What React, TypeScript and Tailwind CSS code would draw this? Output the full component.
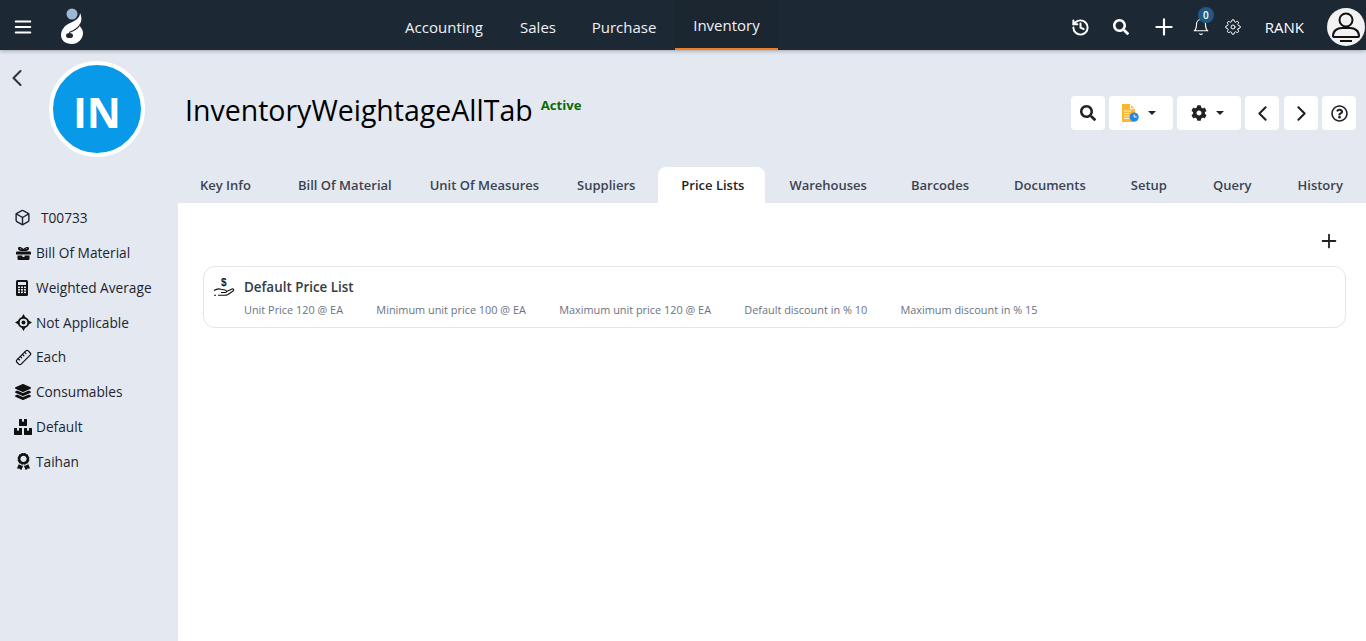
import React from "react";
import { FaLayerGroup, FaBoxes, FaAward, FaCog, FaSearch, FaRegQuestionCircle } from "react-icons/fa";
import { FiBox, FiSettings } from "react-icons/fi";
import { LuHistory, LuBell, LuChevronLeft, LuChevronRight, LuPlus, LuRuler, LuMenu } from "react-icons/lu";

const Logo = () => (
  <svg width="24" height="37" viewBox="0 0 24 37">
    <circle cx="12" cy="6" r="5.500" fill="#9db8d4" />
    <path fill="#fff" d="M20 5C20 10 15 13 10 15C5 17 1 22 1 27C1 32 5 36 12 36C18 36 23 31 23 25C23 21 20 19 19 17C22 14 22 9 20 5Z" />
    <ellipse cx="9.500" cy="27.500" rx="3.500" ry="2.600" fill="#1d2835" />
    <path d="M9 24.500C13 23 17 21.500 19.500 17.500" stroke="#1d2835" strokeWidth="1.200" fill="none" />
  </svg>
);

const BomIcon = () => (
  <svg width="17" height="15" viewBox="0 0 17 15" fill="#111">
    <path fillRule="evenodd" d="M3 2.500C3 .5 6 .5 8.500 3C11 .5 14 .5 14 2.500C14 4 12.500 5 11 5H6C4.500 5 3 4 3 2.500ZM5 2.300C5 3 6 3.500 7 3.500C6 2.500 5 2 5 2.300ZM12 2.300C12 2 11 2.500 10 3.500C11 3.500 12 3 12 2.300Z" />
    <path d="M1 6.500C1 6 1.500 5.500 2 5.500H15C15.500 5.500 16 6 16 6.500V8.500H1Z" />
    <path d="M2.500 9.500H7.500V11H9.500V9.500H14.500V12.500C14.500 13.500 14 14 13 14H4C3 14 2.500 13.500 2.500 12.500Z" />
  </svg>
);

const CalcIcon = () => (
  <svg width="12" height="16" viewBox="0 0 12 16">
    <rect width="12" height="16" rx="1.500" fill="#111" />
    <rect x="2" y="2" width="8" height="3" fill="#e4e9f1" />
    {[6.5, 9, 11.5].flatMap((y) =>
      [2, 5, 8].map((x) => <rect key={`${x}-${y}`} x={x} y={y} width="2" height="1.600" fill="#e4e9f1" />)
    )}
  </svg>
);

const TargetIcon = () => (
  <svg width="17" height="17" viewBox="0 0 17 17" fill="#111">
    <circle cx="8.500" cy="8.500" r="4.800" fill="none" stroke="#111" strokeWidth="1.900" />
    <circle cx="8.500" cy="8.500" r="2" />
    <path d="M8.500 0L10.200 3H6.800ZM8.500 17L6.800 14H10.200ZM0 8.500L3 6.800V10.200ZM17 8.500L14 10.200V6.800Z" />
  </svg>
);

const sideItems: [React.ReactNode, string][] = [
  [<BomIcon />, "Bill Of Material"],
  [<span className="ml-[1px] flex"><CalcIcon /></span>, "Weighted Average"],
  [<TargetIcon />, "Not Applicable"],
  [<LuRuler size={17} strokeWidth={1.700} className="-scale-x-100" />, "Each"],
  [<FaLayerGroup size={16} />, "Consumables"],
  [<span className="-ml-[1px] flex"><FaBoxes size={18} /></span>, "Default"],
  [<FaAward size={17} />, "Taihan"],
];

const tabs: [string, string][] = [
  ["Key Info", "pl-[22px] pr-[23px]"],
  ["Bill Of Material", "pl-[24px] pr-[19px]"],
  ["Unit Of Measures", "pl-[19px] pr-[18px]"],
  ["Suppliers", "pl-[20px] pr-[23px]"],
  ["Price Lists", "pl-[23px] pr-[21px]"],
  ["Warehouses", "pl-[24px] pr-[21px]"],
  ["Barcodes", "pl-[23px] pr-[22px]"],
  ["Documents", "pl-[23px] pr-[22px]"],
  ["Setup", "pl-[23px] pr-[23px]"],
  ["Query", "pl-[23px] pr-[23px]"],
  ["History", "pl-[23px] pr-[22px]"],
];
const details = ["Unit Price 120 @ EA", "Minimum unit price 100 @ EA", "Maximum unit price 120 @ EA", "Default discount in % 10", "Maximum discount in % 15"];

const Btn = ({ className, children }: { className: string; children: React.ReactNode }) => (
  <button className={`${className} h-[34px] bg-white rounded flex items-center text-[#222]`}>{children}</button>
);
const Caret = () => <span className="w-0 h-0 border-x-[4px] border-x-transparent border-t-[4px] border-t-[#222]" />;

export default function App() {
  return (
    <div className="h-[641px] w-[1366px] overflow-hidden flex flex-col bg-[#e4e9f1] font-['Open_Sans','Noto_Sans',sans-serif]">
      <header className="relative z-10 h-[50px] shrink-0 bg-[#1d2835] shadow-[0_1px_4px_rgba(0,0,0,0.3)] flex items-center text-white">
        <LuMenu size={22} className="ml-[12px] mt-[3px] shrink-0" />
        <div className="ml-[26px] mt-[3px] shrink-0 flex"><Logo /></div>
        <nav className="ml-[302px] flex h-full text-[15px] text-[#f0f2f5]">
          <a className="w-[116px] pt-[4px] flex items-center justify-center">Accounting</a>
          <a className="w-[72px] pt-[4px] flex items-center justify-center">Sales</a>
          <a className="w-[100px] pt-[4px] flex items-center justify-center">Purchase</a>
          <a className="ml-[1px] w-[103px] pt-[2px] flex items-center justify-center border-b-2 border-[#f47b20] bg-[#1c2630]">Inventory</a>
        </nav>
        <div className="ml-auto flex items-center h-full pr-[1px] pt-[4px]">
          <LuHistory size={19} strokeWidth={2.500} />
          <FaSearch size={16} className="ml-[23px]" />
          <LuPlus size={26} className="ml-[22px]" />
          <div className="relative ml-[15px]">
            <LuBell size={18} strokeWidth={1.500} />
            <span className="absolute -top-[11px] left-[6px] w-[16px] h-[16px] rounded-full bg-[#1f5a85] text-[10px] font-semibold flex items-center justify-center">0</span>
          </div>
          <FiSettings size={16} strokeWidth={1.500} className="ml-[15px]" />
          <span className="ml-[24px] text-[15px]">RANK</span>
          <div className="ml-[23px] w-[38px] h-[38px] rounded-full bg-[#f2f2f2] flex items-center justify-center">
            <svg width="34" height="34" viewBox="0 0 34 34" fill="none" stroke="#111" strokeWidth="2">
              <circle cx="17" cy="10" r="6.500" />
              <path d="M4 26c0-5 4-8 9-8h8c5 0 9 3 9 8 0 1-1 1-2 1H6c-1 0-2 0-2-1z" />
              <path d="M11 31h12" />
            </svg>
          </div>
        </div>
      </header>

      <div className="flex-1 flex min-h-0">
        <aside className="w-[178px] shrink-0 flex flex-col">
          <LuChevronLeft size={28} strokeWidth={1.800} className="ml-[3px] mt-[14px] text-[#333]" />
          <div className="ml-[49px] mt-[-31px] w-[96px] h-[96px] rounded-full bg-[#0899e8] border-[4px] border-white flex items-center justify-center pt-[4px] text-white text-[42px] font-bold">IN</div>
          <ul className="mt-[43px] text-[13.700px] text-[#1c2430]">
            <li className="h-[35.800px] flex items-center pl-[14px]"><FiBox size={17} /><span className="ml-[10px]">T00733</span></li>
            {sideItems.map(([icon, t]) => (
              <li key={t} className="h-[34.800px] flex items-center">
                <span className="w-[36px] pl-[15px] flex items-center text-[#111]">{icon}</span>
                <span>{t}</span>
              </li>
            ))}
          </ul>
        </aside>
        <main className="flex-1 min-w-0 flex flex-col">
          <div className="h-[117px] shrink-0 flex items-start">
            <div className="ml-[7px] mt-[41px] text-[28.500px] leading-[38px] text-black">InventoryWeightageAllTab</div>
            <div className="ml-[8px] mt-[45px] text-[13.200px] font-bold text-[#086b08] leading-[20px]">Active</div>
            <div className="ml-auto mr-[10px] mt-[46px] flex gap-[4px]">
              <Btn className="w-[34px] justify-center"><FaSearch size={16} /></Btn>
              <Btn className="w-[64px] pl-[13px] gap-[9px]">
                <svg width="17" height="18" viewBox="0 0 17 18">
                  <path fill="#fdb62f" d="M0 0h8l5 5v13H0z" />
                  <path d="M8.500 .8v4h4" stroke="#fff" fill="none" />
                  <path d="M2 7h7M2 9.500h5M2 12h5M2 14.500h5" stroke="#fff" strokeWidth="0.800" />
                  <circle cx="12.200" cy="13" r="4.500" fill="#1e88e5" />
                  <path d="M12.200 10.500v2.500h2.500" stroke="#fff" fill="none" />
                </svg>
                <Caret />
              </Btn>
              <Btn className="w-[64px] pl-[14px] gap-[9px]"><FaCog size={16} /><Caret /></Btn>
              <Btn className="w-[34px] justify-center"><LuChevronLeft size={25} strokeWidth={2} /></Btn>
              <Btn className="ml-[1px] w-[34px] justify-center"><LuChevronRight size={25} strokeWidth={2} /></Btn>
              <Btn className="w-[34px] justify-center"><FaRegQuestionCircle size={17} /></Btn>
            </div>
          </div>
          <div className="h-[36px] shrink-0 flex text-[13px] font-semibold text-[#3b4350]">
            {tabs.map(([t, pad]) => (
              <div key={t} className={`flex items-center justify-center pt-[2px] whitespace-nowrap ${pad} ${t === "Price Lists" ? "bg-white rounded-t-lg text-[#222]" : ""}`}>{t}</div>
            ))}
          </div>
          <section className="flex-1 bg-white pl-[25px] pr-[20px] pt-[27px]">
            <div className="flex justify-end pr-[6px] h-[36px]"><LuPlus size={22} className="text-[#222]" /></div>
            <div className="h-[62px] border border-[#e2e5ea] rounded-xl flex pl-[9px] pt-[9px]">
              <svg width="22" height="22" viewBox="0 0 22 22" fill="none" stroke="#111" strokeWidth="1.100" className="shrink-0">
                <text x="8" y="10" fontSize="10" fontWeight="700" fill="#111" stroke="none" fontFamily="Liberation Sans">$</text>
                <path d="M1 14.500C4 12.500 6 12.500 8 13.300L12 14C14 14.500 14 16.500 12 16.500H8" />
                <path d="M13.500 15.500L19 13C20.500 12.500 21.500 14 20 15L15 18.500C14 19 13 19.300 12 19.300H5M1 19.300H3" />
              </svg>
              <div className="ml-[9px]">
                <div className="mt-[1px] text-[13.400px] font-semibold text-[#333b47] leading-[20px]">Default Price List</div>
                <div className="flex gap-[33.300px] mt-[6px] text-[10.900px] text-[#6b7280] leading-[14px]">
                  {details.map((d) => <span key={d}>{d}</span>)}
                </div>
              </div>
            </div>
          </section>
        </main>
      </div>
    </div>
  );
}
